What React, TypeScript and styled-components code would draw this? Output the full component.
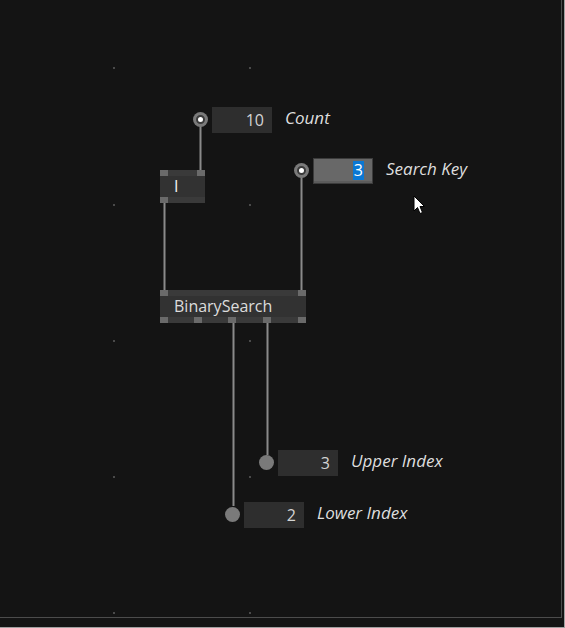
import styled, { createGlobalStyle } from "styled-components";

const GlobalStyle = createGlobalStyle`
  html, body {
    margin: 0;
    padding: 0;
    background: #141414;
  }
  body {
    font-family: "Open Sans", "Noto Sans", "DejaVu Sans", sans-serif;
  }
`;

const Window = styled.div`
  width: 564px;
  height: 627px;
  background: #141414;
  border-right: 1px solid #a0a0a0;
  border-bottom: 1px solid #a0a0a0;
`;

const Patch = styled.div`
  position: relative;
  width: 561px;
  height: 617px;
  border-right: 1px solid #4c4c4c;
  border-bottom: 1px solid #4c4c4c;
  overflow: hidden;
`;

const Wires = styled.svg`
  position: absolute;
  left: 0;
  top: 0;
  pointer-events: none;
`;

const Node = styled.div<{ x: number; y: number; w: number }>`
  position: absolute;
  left: ${(p) => p.x}px;
  top: ${(p) => p.y}px;
  width: ${(p) => p.w}px;
  height: 33px;
  background: #323232;
  display: flex;
  flex-direction: column;
  justify-content: space-between;
`;

const PinRow = styled.div`
  position: relative;
  height: 6px;
  background: #3a3a3a;
`;

const Pin = styled.span<{ at: number }>`
  position: absolute;
  top: 0;
  left: ${(p) => p.at}px;
  width: 8px;
  height: 6px;
  background: #6a6a6a;
`;

const NodeName = styled.div<{ bold?: boolean }>`
  flex: 1;
  display: flex;
  align-items: center;
  padding-left: 14px;
  font-size: 16px;
  line-height: 1;
  color: ${(p) => (p.bold ? "#f4f4f4" : "#dcdcdc")};
  padding-bottom: 1px;
`;

const IOBox = styled.div<{ x: number; y: number }>`
  position: absolute;
  left: ${(p) => p.x}px;
  top: ${(p) => p.y}px;
  display: flex;
  align-items: center;
`;

const PinSlot = styled.div`
  width: 19px;
  display: flex;
  justify-content: flex-start;
`;

const InPin = styled.span`
  width: 15px;
  height: 15px;
  border-radius: 50%;
  background: #7a7a7a;
  display: flex;
  align-items: center;
  justify-content: center;
  &::after {
    content: "";
    width: 9px;
    height: 9px;
    border-radius: 50%;
    box-sizing: border-box;
    border: 2px solid #3a3a3a;
    background: #ffffff;
  }
`;

const OutPin = styled.span`
  width: 15px;
  height: 15px;
  border-radius: 50%;
  background: #7a7a7a;
`;

const Value = styled.div<{ editing?: boolean }>`
  box-sizing: border-box;
  width: 60px;
  height: 26px;
  padding-right: 8px;
  display: flex;
  align-items: center;
  justify-content: flex-end;
  background: ${(p) => (p.editing ? "#686868" : "#2e2e2e")};
  border: ${(p) => (p.editing ? "1px solid #3c3c3c" : "none")};
  box-shadow: ${(p) => (p.editing ? "inset 0 -2px 0 #5c5c5c" : "none")};
  font-size: 16px;
  color: #d4d4d4;
`;

const Selected = styled.span`
  background: #0a78d4;
  color: #ffffff;
  padding: 0 1px;
  line-height: 19px;
`;

const Label = styled.span`
  margin-left: 13px;
  padding-bottom: 4px;
  font-size: 17px;
  font-style: italic;
  color: #dedede;
  white-space: nowrap;
`;

const Cursor = styled.svg`
  position: absolute;
  left: 413px;
  top: 195px;
`;

const dots: [number, number][] = [];
[67, 204, 340, 476, 612].forEach((y) =>
  [113, 249].forEach((x) => dots.push([x, y]))
);

const wires = [
  { x: 200, y1: 126, y2: 171 },
  { x: 164, y1: 203, y2: 291 },
  { x: 301, y1: 177, y2: 291 },
  { x: 233, y1: 323, y2: 506 },
  { x: 267, y1: 323, y2: 455 },
];

const ioBoxes = [
  { x: 193, y: 106, value: "10", label: "Count", kind: "in" },
  { x: 294, y: 157, value: "3", label: "Search Key", kind: "edit" },
  { x: 259, y: 449, value: "3", label: "Upper Index", kind: "out" },
  { x: 225, y: 501, value: "2", label: "Lower Index", kind: "out" },
];

export default function App() {
  return (
    <>
      <GlobalStyle />
      <Window>
        <Patch>
          <Wires width={561} height={617}>
            {dots.map(([x, y]) => (
              <rect key={`${x}-${y}`} x={x} y={y} width={2} height={2} fill="#4a4a4a" />
            ))}
            {wires.map((w) => (
              <line
                key={`${w.x}-${w.y1}`}
                x1={w.x + 0.5}
                x2={w.x + 0.5}
                y1={w.y1}
                y2={w.y2}
                stroke="#8a8a8a"
                strokeWidth={2}
              />
            ))}
          </Wires>

          <Node x={160} y={170} w={45}>
            <PinRow>
              <Pin at={0} />
              <Pin at={37} />
            </PinRow>
            <NodeName bold>I</NodeName>
            <PinRow>
              <Pin at={0} />
            </PinRow>
          </Node>

          <Node x={160} y={290} w={146}>
            <PinRow>
              <Pin at={0} />
              <Pin at={138} />
            </PinRow>
            <NodeName>BinarySearch</NodeName>
            <PinRow>
              <Pin at={0} />
              <Pin at={34} />
              <Pin at={68} />
              <Pin at={103} />
              <Pin at={138} />
            </PinRow>
          </Node>

          {ioBoxes.map((b) => (
            <IOBox key={b.label} x={b.x} y={b.y}>
              <PinSlot>{b.kind === "out" ? <OutPin /> : <InPin />}</PinSlot>
              <Value editing={b.kind === "edit"}>
                {b.kind === "edit" ? <Selected>{b.value}</Selected> : b.value}
              </Value>
              <Label>{b.label}</Label>
            </IOBox>
          ))}

          <Cursor width={13} height={20} viewBox="0 0 13 20">
            <path
              d="M1 1 L1 16 L4.5 12.5 L7 18.5 L9.5 17.5 L7 11.5 L11.5 11.5 Z"
              fill="#ffffff"
              stroke="#000000"
              strokeWidth={1}
              strokeLinejoin="round"
            />
          </Cursor>
        </Patch>
      </Window>
    </>
  );
}
